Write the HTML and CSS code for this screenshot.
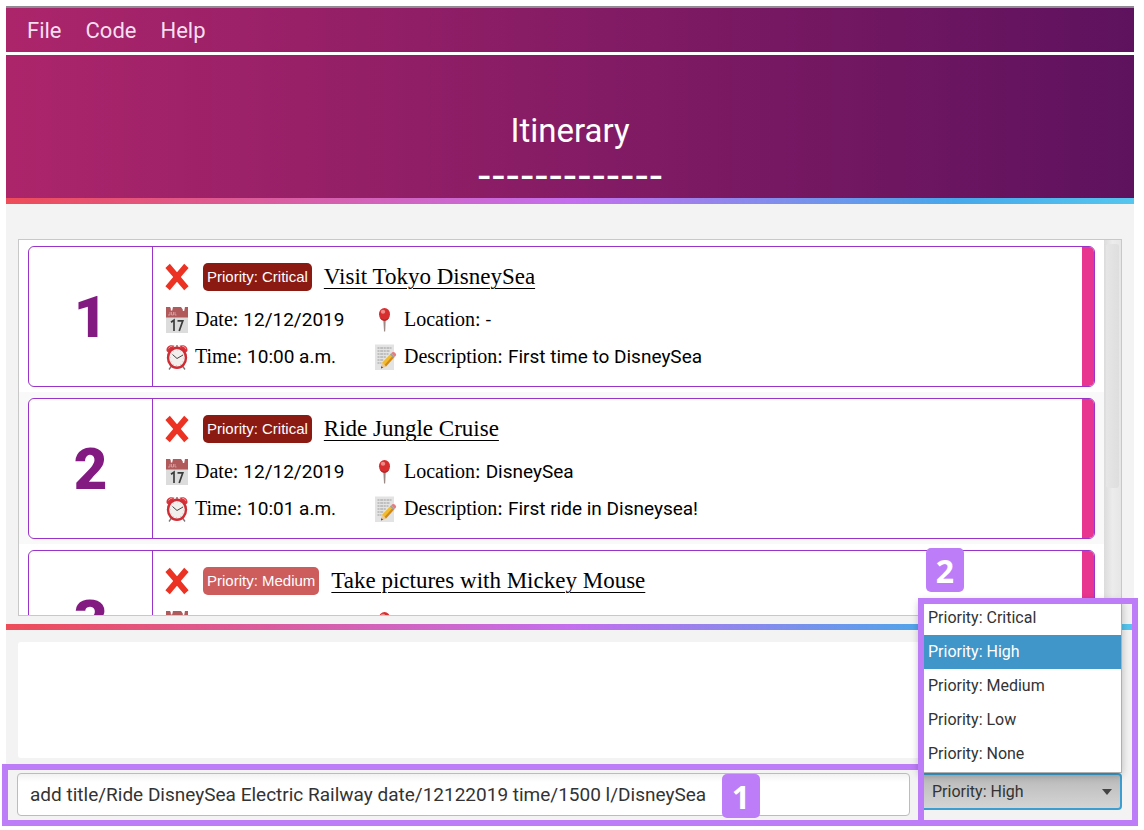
FILE: index.html
```html
<!DOCTYPE html>
<html lang="en">
<head>
<meta charset="utf-8">
<title>Itinerary</title>
<link rel="stylesheet" href="styles.css">
</head>
<body>
<svg class="defs" width="0" height="0" aria-hidden="true">
  <symbol id="cross" viewBox="0 0 24 28">
    <path d="M4.800.8 12 9.300 19.200.8 23.600 5 15.800 14 23.600 23.200 19.200 27.300 12 18.700 4.800 27.300.4 23.200 8.200 14 .4 5z" fill="#ec3323"/>
  </symbol>
  <symbol id="calendar" viewBox="0 0 22 26">
    <rect width="22" height="26" fill="#dcdcdc"/>
    <rect width="22" height="10.500" fill="#b05a5c"/>
    <path d="M4 0h3l-1 3.500zM15 0h4l-1 4z" fill="#fff"/>
    <path d="M5.500 1v2.500M17.500 1v3" stroke="#fff" stroke-width="1.400"/>
    <path d="M2 8h2V5M5.500 5v3h2V5M9 5v3h1.500" fill="none" stroke="#dba9a9" stroke-width=".8"/>
    <path d="M5 15.200 8 13.200V24M11.500 13.800h5.300L13.200 24" fill="none" stroke="#3c3c3c" stroke-width="1.700"/>
  </symbol>
  <symbol id="clock" viewBox="0 0 22 26">
    <path d="M5.500 22 3 25.500M16.500 22l2.500 3.500" stroke="#777" stroke-width="1.300"/>
    <path d="M.6 7C-.2 3 4 0 8.500 1.800L2.500 9zM21.400 7c.8-4-3.400-7-7.900-5.200l6 7.200z" fill="#d8343c"/>
    <path d="M2.500 4.500Q4 2 6.500 2M16 2q3 .3 4 3" stroke="#f49a9a" fill="none"/>
    <path d="M11 1v3" stroke="#999" stroke-width="2"/>
    <ellipse cx="11" cy="13.800" rx="9" ry="10" fill="#f3efec" stroke="#cf2d35" stroke-width="2.400"/>
    <ellipse cx="11" cy="13.800" rx="6.800" ry="7.800" fill="none" stroke="#aaa" stroke-width="1" stroke-dasharray=".6 3.200"/>
    <path d="m6.500 10.500 4.500 4 6-3.500" fill="none" stroke="#444" stroke-width="1"/>
  </symbol>
  <symbol id="pin" viewBox="0 0 22 26">
    <path d="M8.200 11h2.600l-.6 13.500H9z" fill="#9b8a86"/>
    <ellipse cx="9.500" cy="7.300" rx="5.500" ry="6.300" fill="#d72f2f"/>
    <ellipse cx="8" cy="4.700" rx="2.200" ry="2" fill="#f08a86"/>
    <path d="M5.500 11.500q4 3.600 8 0" stroke="#a51c1e" fill="none"/>
  </symbol>
  <symbol id="memo" viewBox="0 0 22 26">
    <path d="M0 .5h19V26H0z" fill="#e3e3e3"/>
    <path d="M2.500 4h14M2.500 7h12M2.500 10h11M2.500 13h9M2.500 16h6M2.500 19h4" stroke="#9c9c9c" stroke-width="1.100" stroke-dasharray="2 .7 3 .6"/>
    <path d="M6 24.500 7.300 18.500 16 9.500l3.500 3.500L11 22.500z" fill="#f2bb2c"/>
    <path d="M9.500 21 18 11.500l1.500 1.500L11 22.500z" fill="#d18a19"/>
    <path d="m6 24.500 1.300-6L11 22.500z" fill="#e8c9a0"/>
    <path d="m6 24.500.5-2.300 1.500 1.400z" fill="#333"/>
    <path d="m15 10.500 1.300-1.300 3.500 3.500-1.300 1.300z" fill="#9ba3a8"/>
    <path d="m16.300 9.200 1-1q1.500-.8 3 .8t.5 2.700l-1 1z" fill="#ea7a7d"/>
  </symbol>
</svg>

<div class="app">
  <nav class="menu-bar">
    <button class="menu" type="button">File</button>
    <button class="menu" type="button">Code</button>
    <button class="menu" type="button">Help</button>
  </nav>

  <header class="banner">
    <h1 class="banner-title">Itinerary</h1>
    <div class="banner-rule">-------------</div>
  </header>
  <div class="rainbow"></div>

  <main class="events">
    <ol class="event-list">
      <li class="event-cell">
        <article class="card">
          <div class="card-index">1</div>
          <div class="card-body">
            <div class="card-head">
              <svg class="icon-cross" role="img" aria-label="Not done"><use href="#cross"/></svg>
              <span class="tag tag-critical">Priority: Critical</span>
              <h2 class="card-title">Visit Tokyo DisneySea</h2>
            </div>
            <div class="facts">
              <div class="fact"><svg class="icon"><use href="#calendar"/></svg><span class="label">Date:</span><span>12/12/2019</span></div>
              <div class="fact"><svg class="icon"><use href="#pin"/></svg><span class="label">Location:</span><span>-</span></div>
              <div class="fact"><svg class="icon"><use href="#clock"/></svg><span class="label">Time:</span><span>10:00 a.m.</span></div>
              <div class="fact"><svg class="icon"><use href="#memo"/></svg><span class="label">Description:</span><span>First time to DisneySea</span></div>
            </div>
          </div>
          <div class="card-edge"></div>
        </article>
      </li>
      <li class="event-cell">
        <article class="card">
          <div class="card-index">2</div>
          <div class="card-body">
            <div class="card-head">
              <svg class="icon-cross" role="img" aria-label="Not done"><use href="#cross"/></svg>
              <span class="tag tag-critical">Priority: Critical</span>
              <h2 class="card-title">Ride Jungle Cruise</h2>
            </div>
            <div class="facts">
              <div class="fact"><svg class="icon"><use href="#calendar"/></svg><span class="label">Date:</span><span>12/12/2019</span></div>
              <div class="fact"><svg class="icon"><use href="#pin"/></svg><span class="label">Location:</span><span>DisneySea</span></div>
              <div class="fact"><svg class="icon"><use href="#clock"/></svg><span class="label">Time:</span><span>10:01 a.m.</span></div>
              <div class="fact"><svg class="icon"><use href="#memo"/></svg><span class="label">Description:</span><span>First ride in Disneysea!</span></div>
            </div>
          </div>
          <div class="card-edge"></div>
        </article>
      </li>
      <li class="event-cell">
        <article class="card">
          <div class="card-index">3</div>
          <div class="card-body">
            <div class="card-head">
              <svg class="icon-cross" role="img" aria-label="Not done"><use href="#cross"/></svg>
              <span class="tag tag-medium">Priority: Medium</span>
              <h2 class="card-title">Take pictures with Mickey Mouse</h2>
            </div>
            <div class="facts">
              <div class="fact"><svg class="icon"><use href="#calendar"/></svg><span class="label">Date:</span></div>
              <div class="fact"><svg class="icon"><use href="#pin"/></svg><span class="label">Location:</span></div>
            </div>
          </div>
          <div class="card-edge"></div>
        </article>
      </li>
    </ol>
    <div class="scrollbar"><div class="scroll-thumb"></div></div>
  </main>
  <div class="rainbow"></div>

  <section class="result" aria-label="Result"></section>

  <form class="command-bar">
    <div class="command-field">
      <input class="command-input" type="text" aria-label="Command" value="add title/Ride DisneySea Electric Railway date/12122019 time/1500 l/DisneySea">
      <div class="frame frame-command"></div>
      <span class="step step-command">1</span>
    </div>
    <div class="priority-field">
      <select class="priority-select" aria-label="Priority">
        <option>Priority: Critical</option>
        <option selected>Priority: High</option>
        <option>Priority: Medium</option>
        <option>Priority: Low</option>
        <option>Priority: None</option>
      </select>
      <svg class="arrow" viewBox="0 0 10 6"><path d="M0 0h10L5 6z" fill="#444"/></svg>
      <ul class="options" role="listbox" aria-label="Priority options">
        <li class="option" role="option">Priority: Critical</li>
        <li class="option option-active" role="option" aria-selected="true">Priority: High</li>
        <li class="option" role="option">Priority: Medium</li>
        <li class="option" role="option">Priority: Low</li>
        <li class="option" role="option">Priority: None</li>
      </ul>
      <div class="frame frame-priority"></div>
      <span class="step step-priority">2</span>
    </div>
  </form>
</div>
</body>
</html>
```
FILE: styles.css
```css
* { box-sizing: border-box; }

body {
  margin: 0;
  background: #fff;
  color: #000;
  font-family: Roboto, sans-serif;
}

.defs { position: absolute; }

.app {
  display: flex;
  flex-direction: column;
  height: 100vh;
  padding: 6px 10px 4px 6px;
  background: #f3f3f3 content-box;
  overflow: hidden;
}

.menu-bar {
  display: flex;
  align-items: center;
  gap: 24px;
  height: 46px;
  padding: 0 21px;
  border-top: 2px solid #8f8a94;
  background: linear-gradient(90deg, #ac256b, #5e125e);
}

.menu {
  padding: 0;
  border: 0;
  background: none;
  color: #f6dff0;
  font: 22px Roboto, sans-serif;
}

.banner {
  display: flex;
  flex-direction: column;
  align-items: center;
  height: 146px;
  padding-top: 54px;
  border-top: 3px solid #fff;
  background: linear-gradient(90deg, #ac256b, #5e125e);
}

.banner-title {
  margin: 0;
  color: #fff;
  font-size: 33px;
  font-weight: 400;
  line-height: 44px;
}

.banner-rule {
  margin-top: 8px;
  color: #fff;
  font: 43px/26px "Liberation Sans", sans-serif;
}

.rainbow {
  flex: none;
  height: 6px;
  background: linear-gradient(90deg, #ee4c58, #c46eee 50%, #46a8ea 84%, #55c6ee);
}

.events {
  display: flex;
  flex: 1;
  min-height: 0;
  margin: 35px 12px 8px;
  border: 1px solid #c8c8c8;
  background: #fff;
}

.event-list {
  flex: 1;
  margin: 0;
  padding: 0;
  overflow: hidden;
  list-style: none;
}

.event-cell { padding: 6px 9px 5px; }
.event-cell:nth-child(even) { background: #f9f9f9; }

.card {
  display: flex;
  height: 141px;
  border: 1px solid #9a34c9;
  border-radius: 6px;
  background: #fff;
  overflow: hidden;
}

.card-index {
  display: flex;
  align-items: center;
  justify-content: center;
  width: 124px;
  border-right: 1px solid #9a34c9;
  color: #831a82;
  font-size: 58px;
  font-weight: 900;
}

.card-body {
  flex: 1;
  padding: 10px 12px;
}

.card-head {
  display: flex;
  align-items: center;
  height: 40px;
}

.icon-cross {
  width: 24px;
  height: 28px;
  margin-right: 14px;
}

.tag {
  margin-right: 12px;
  padding: 0 4px;
  border-radius: 5px;
  color: #fff;
  font: 15px/28px "Liberation Sans", sans-serif;
}

.tag-critical { background: #8b1a12; }
.tag-medium { background: #cd5c5c; }

.card-title {
  margin: 0;
  font: 23px/32px "Liberation Serif", serif;
  text-decoration: underline;
  text-decoration-thickness: 1px;
  text-underline-offset: 4px;
}

.facts {
  display: grid;
  grid-template-columns: 209px 1fr;
  grid-auto-rows: 37px;
  margin-top: 4px;
}

.fact {
  display: flex;
  align-items: center;
  font-size: 19px;
}

.icon {
  width: 22px;
  height: 26px;
  margin: 0 7px 0 1px;
}

.label {
  margin-right: 5px;
  font: 20px "Liberation Serif", serif;
}

.card-edge {
  width: 12px;
  background: #e8358f;
}

.scrollbar {
  width: 17px;
  padding: 4px 2px;
  background: linear-gradient(90deg, #dcdcdc, #ececec 50%, #e6e6e6);
}

.scroll-thumb {
  height: 244px;
  border-radius: 3px;
  background: linear-gradient(90deg, #e6e6e6, #dedede);
}

.result {
  flex: none;
  height: 116px;
  margin: 12px 12px 15px;
  border-radius: 3px;
  background: #fff;
}

.command-bar {
  display: flex;
  gap: 9px;
  padding: 0 12px 10px 11px;
}

.command-field {
  position: relative;
  flex: 1;
}

.command-input {
  display: block;
  width: 100%;
  height: 43px;
  padding: 0 12px;
  border: 1px solid #bcbcbc;
  border-radius: 4px;
  background: linear-gradient(#f2f2f2, #fff 8px);
  color: #333;
  font: 19px Roboto, sans-serif;
}

.priority-field {
  position: relative;
  width: 203px;
}

.priority-select {
  display: block;
  width: 100%;
  height: 37px;
  padding: 0 11px;
  border: 2px solid #3a9fd0;
  border-radius: 4px;
  appearance: none;
  background: linear-gradient(#b9b9b9, #d4d4d4);
  color: #333;
  font: 16px Roboto, sans-serif;
}

.arrow {
  position: absolute;
  top: 16px;
  right: 10px;
  width: 10px;
  height: 6px;
}

.options {
  position: absolute;
  right: 0;
  bottom: 43px;
  left: 0;
  margin: 0;
  padding: 0 0 1px;
  border: 1px solid #b0b0b0;
  background: #fff;
  box-shadow: 0 2px 8px rgba(0, 0, 0, .25);
  list-style: none;
}

.option {
  height: 34px;
  padding: 0 8px;
  color: #333;
  font-size: 16px;
  line-height: 34px;
}

.option-active {
  background: #4095c9;
  color: #fff;
}

.frame {
  position: absolute;
  border: 6px solid #bd7cf8;
  pointer-events: none;
}

.frame-command { inset: -9px -14px -10px -15px; }
.frame-priority { inset: -175px -16px -10px -1px; }

.step {
  position: absolute;
  width: 38px;
  height: 44px;
  border-radius: 5px;
  background: #bd7cf8;
  color: #fff;
  font: 700 32px/46px "Open Sans", sans-serif;
  text-align: center;
}

.step-command { top: 1px; left: 705px; }
.step-priority { top: -225px; left: 7px; }
```
